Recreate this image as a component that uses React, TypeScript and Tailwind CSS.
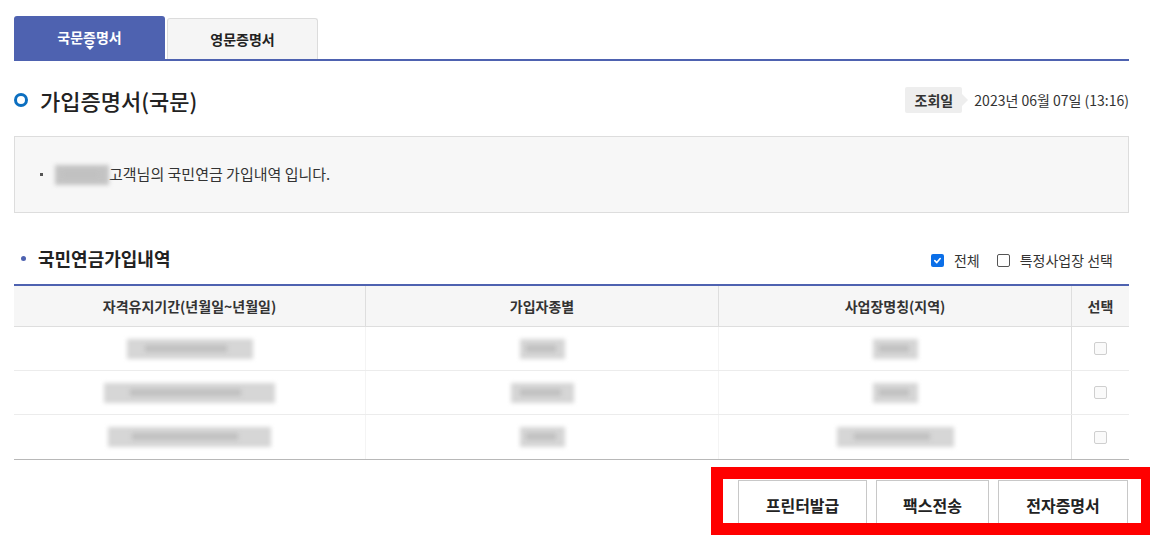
import React from "react";

const font = { fontFamily: '"Noto Sans CJK KR", "Noto Sans", sans-serif' };

function Blur({ w, h = 18, dark = false }: { w: number; h?: number; dark?: boolean }) {
  return (
    <div className="relative inline-block" style={{ width: w, height: h }}>
      <div className={`absolute inset-0 blur-[2px] ${dark ? "bg-[#c4c4c4]" : "bg-[#d6d6d6]"}`} />
      <div className="absolute left-[15%] right-[20%] top-[30%] bottom-[35%] bg-[#c0c0c0] blur-[2px]" />
    </div>
  );
}

export default function App() {
  const rows = [
    { a: 126, b: 45, c: 45 },
    { a: 171, b: 63, c: 45 },
    { a: 163, b: 45, c: 117 },
  ];
  return (
    <div className="relative w-[1150px] h-[538px] bg-white overflow-hidden text-[#222]" style={font}>
      <div className="ml-[14px] w-[1115px] pt-[16px]">
        {/* Tabs */}
        <div className="flex items-end gap-[2px] border-b-2 border-[#4e62b0] h-[45px]">
          <div className="relative w-[151px] h-[43px] bg-[#4e62b0] rounded-t-[3px] flex items-center justify-center text-white text-[14px] font-bold">
            국문증명서
            <span className="absolute left-1/2 -translate-x-1/2 bottom-[9px] w-0 h-0 border-l-[4px] border-r-[4px] border-t-[4px] border-l-transparent border-r-transparent border-t-white" />
          </div>
          <div className="w-[151px] h-[41px] bg-[#f5f5f5] border border-b-0 border-[#dcdcdc] rounded-t-[3px] flex items-center justify-center text-[14px] font-bold text-[#222]">
            영문증명서
          </div>
        </div>

        {/* Title row */}
        <div className="flex items-center justify-between h-[75px] pt-[3px]">
          <div className="flex items-center gap-[12px]">
            <span className="w-[14px] h-[14px] rounded-full border-[3px] border-[#0c6fc0]" />
            <span className="text-[22px] font-medium text-[#222] leading-none">가입증명서(국문)</span>
          </div>
          <div className="flex items-center pt-[-2px]">
            <div className="relative h-[26px] w-[57px] bg-[#eeeeee] rounded-[2px] flex items-center justify-center text-[14px] font-bold text-[#333]">
              조회일
              <span className="absolute right-[-6px] top-1/2 -translate-y-1/2 w-0 h-0 border-t-[6px] border-b-[6px] border-l-[6px] border-t-transparent border-b-transparent border-l-[#eeeeee]" />
            </div>
            <span className="ml-[12px] text-[14px] text-[#333]">2023년 06월 07일 (13:16)</span>
          </div>
        </div>

        {/* Info box */}
        <div className="h-[77px] bg-[#f7f7f7] border border-[#dddddd] flex items-center pl-[25px] text-[15px] text-[#333]">
          <span className="w-[3px] h-[3px] bg-[#555] mr-[12px]" />
          <Blur w={54} h={20} dark />
          <span>고객님의 국민연금 가입내역 입니다.</span>
        </div>

        {/* Section title */}
        <div className="flex items-center justify-between h-[71px] pt-[20px]">
          <div className="flex items-center pl-[7px]">
            <span className="w-[5px] h-[5px] rounded-full bg-[#4e62b0] mr-[12px]" />
            <span className="text-[18px] font-bold text-[#222]">국민연금가입내역</span>
          </div>
          <div className="flex items-center text-[14px] text-[#333] pr-[16px] pt-[4px]">
            <span className="w-[13px] h-[13px] rounded-[2px] bg-[#0b6fe8] flex items-center justify-center">
              <svg width="9" height="9" viewBox="0 0 10 10"><path d="M2 5.2 L4.2 7.3 L8 2.8" stroke="white" strokeWidth="1.8" fill="none" strokeLinecap="round" strokeLinejoin="round" /></svg>
            </span>
            <span className="ml-[10px]">전체</span>
            <span className="ml-[17px] w-[13px] h-[13px] rounded-[2px] border border-[#555] bg-white" />
            <span className="ml-[10px]">특정사업장 선택</span>
          </div>
        </div>

        {/* Table */}
        <div className="border-t-2 border-[#4e62b0] border-b border-b-[#b8b8b8]">
          <div className="grid grid-cols-[352px_353px_353px_57px] h-[41px] bg-[#f6f6f6] border-b border-[#dedede] text-[14px] font-bold text-[#333]">
            <div className="flex items-center justify-center border-r border-[#dedede]">자격유지기간(년월일~년월일)</div>
            <div className="flex items-center justify-center border-r border-[#dedede]">가입자종별</div>
            <div className="flex items-center justify-center border-r border-[#dedede]">사업장명칭(지역)</div>
            <div className="flex items-center justify-center">선택</div>
          </div>
          {rows.map((r, i) => (
            <div
              key={i}
              className={`grid grid-cols-[352px_353px_353px_57px] h-[44px] ${i < 2 ? "border-b border-[#ececec]" : ""}`}
            >
              <div className="flex items-center justify-center border-r border-[#f4f4f4]">
                <Blur w={r.a} h={20} />
              </div>
              <div className="flex items-center justify-center border-r border-[#f4f4f4]">
                <Blur w={r.b} h={20} />
              </div>
              <div className="flex items-center justify-center border-r border-[#dedede]">
                <Blur w={r.c} h={20} />
              </div>
              <div className="flex items-center justify-center">
                <span className="w-[13px] h-[13px] rounded-[2px] border border-[#cfcfcf] bg-[#fafafa]" />
              </div>
            </div>
          ))}
        </div>

        {/* Buttons */}
        <div className="flex justify-end gap-[9px] pt-[20px] pr-[1px]">
          <button className="w-[129px] h-[50px] bg-white border border-[#c8c8c8] text-[16px] font-bold text-[#222]" style={font}>프린터발급</button>
          <button className="w-[113px] h-[50px] bg-white border border-[#c8c8c8] text-[16px] font-bold text-[#222]" style={font}>팩스전송</button>
          <button className="w-[130px] h-[50px] bg-white border border-[#c8c8c8] text-[16px] font-bold text-[#222]" style={font}>전자증명서</button>
        </div>
      </div>

      {/* Red annotation overlay */}
      <div className="absolute left-[711px] top-[467px] w-[442px] h-[68px] border-[12px] border-[#ff0000] pointer-events-none" />
    </div>
  );
}
